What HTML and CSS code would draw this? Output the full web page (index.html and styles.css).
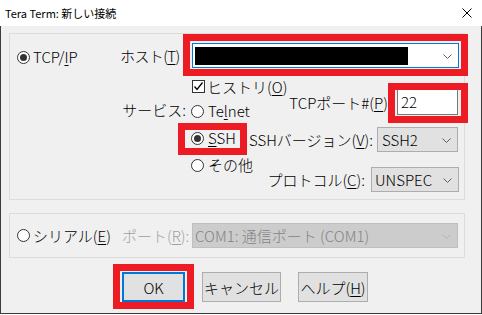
FILE: index.html
```html
<!DOCTYPE html>
<html lang="ja">
<head>
    <meta charset="UTF-8">
    <title>Tera Term: 新しい接続</title>
    <link rel="stylesheet" href="styles.css">
</head>
<body>
<div class="window">
    <div class="titlebar">
        <span class="title">Tera Term: 新しい接続</span>
        <svg class="close" width="10" height="10" viewBox="0 0 10 10">
            <path d="M0.5 0.5 L9.5 9.5 M9.5 0.5 L0.5 9.5" stroke="#000" stroke-width="1" fill="none"/>
        </svg>
    </div>
    <div class="client">
        <!-- TCP/IP -->
        <div class="group group-tcp">
            <div class="tcp-col">
                <label class="radio"><span class="dot checked"></span><span>TCP/<u>I</u>P</span></label>
            </div>
            <div class="tcp-body">
                <div class="host-row">
                    <span class="host-lbl">ホスト(<u>T</u>)</span>
                    <div class="combo host">
                        <div class="selection"></div>
                        <svg class="chev" width="9" height="5" viewBox="0 0 9 5"><polyline points="0.5,0.5 4.5,4.5 8.5,0.5" fill="none" stroke="#606060"/></svg>
                    </div>
                </div>
                <div class="svc">
                    <span class="svc-lbl">サービス:</span>
                    <div class="svc-left">
                        <label class="check-row">
                            <span class="checkbox">
                                <svg width="11" height="11" viewBox="0 0 11 11"><polyline points="1.5,5.5 4,8.5 9.5,1.5" fill="none" stroke="#000" stroke-width="1.3"/></svg>
                            </span>
                            <span>ヒストリ(<u>O</u>)</span>
                        </label>
                        <label class="radio svc-item telnet"><span class="dot"></span><span>Te<u>l</u>net</span></label>
                        <label class="radio svc-item ssh"><span class="dot checked"></span><span><u>S</u>SH</span></label>
                        <label class="radio svc-item other"><span class="dot"></span><span>その他</span></label>
                    </div>
                    <div class="svc-right">
                        <div class="field port-row">
                            <span>TCPポート#(<u>P</u>)</span>
                            <div class="textbox">22</div>
                        </div>
                        <div class="field ver-row">
                            <span>SSHバージョン(<u>V</u>):</span>
                            <div class="select ver">SSH2
                                <svg class="chev" width="9" height="5" viewBox="0 0 9 5"><polyline points="0.5,0.5 4.5,4.5 8.5,0.5" fill="none" stroke="#606060"/></svg>
                            </div>
                        </div>
                        <div class="field proto-row">
                            <span>プロトコル(<u>C</u>):</span>
                            <div class="select proto">UNSPEC
                                <svg class="chev" width="9" height="5" viewBox="0 0 9 5"><polyline points="0.5,0.5 4.5,4.5 8.5,0.5" fill="none" stroke="#606060"/></svg>
                            </div>
                        </div>
                    </div>
                </div>
            </div>
        </div>

        <!-- シリアル -->
        <div class="group group-serial">
            <label class="radio serial"><span class="dot"></span><span>シリアル(<u>E</u>)</span></label>
            <span class="port-lbl">ポート(<u>R</u>):</span>
            <div class="select com">COM1: 通信ポート (COM1)
                <svg class="chev" width="9" height="5" viewBox="0 0 9 5"><polyline points="0.5,0.5 4.5,4.5 8.5,0.5" fill="none" stroke="#b5b5b5"/></svg>
            </div>
        </div>

        <div class="buttons">
            <button class="btn btn-ok">OK</button>
            <button class="btn btn-cancel">キャンセル</button>
            <button class="btn btn-help">ヘルプ(<u>H</u>)</button>
        </div>
    </div>

    <!-- 赤枠 -->
    <div class="mark mark-host"></div>
    <div class="mark mark-port"></div>
    <div class="mark mark-ssh"></div>
    <div class="mark mark-ok"></div>
</div>
</body>
</html>
```

FILE: styles.css
```css
* {
    box-sizing: border-box;
}
body {
    margin: 0;
    background-color: #ffffff;
    font-family: "Noto Sans CJK JP", "Noto Sans", sans-serif;
    font-size: 15px;
    font-weight: 300;
    color: #000000;
}
u {
    text-decoration-thickness: 1px;
    text-underline-offset: 2px;
}
.window {
    position: relative;
    width: 482px;
    height: 314px;
    display: flex;
    flex-direction: column;
}
.titlebar {
    height: 26px;
    background-color: #ffffff;
    display: flex;
    align-items: center;
    padding-left: 5px;
    font-size: 11px;
    font-weight: 400;
}
.close {
    margin-left: auto;
    margin-right: 10px;
}
.client {
    flex: 1;
    background-color: #f0f0f0;
    border: 1px solid #3c3c3c;
    border-top: none;
    padding: 7px 0 0 8px;
}
.group {
    width: 456px;
    border: 1px solid #dcdcdc;
}
.group-tcp {
    height: 167px;
    display: flex;
}
.tcp-col {
    width: 107px;
    flex-shrink: 0;
    padding-left: 7px;
    padding-top: 13px;
}
.radio {
    display: flex;
    align-items: center;
    gap: 3px;
    height: 20px;
    line-height: 20px;
    white-space: nowrap;
}
.dot {
    width: 13px;
    height: 13px;
    border: 1px solid #333333;
    border-radius: 50%;
    background-color: #ffffff;
    display: flex;
    align-items: center;
    justify-content: center;
    flex-shrink: 0;
}
.dot.checked::after {
    content: "";
    width: 7px;
    height: 7px;
    border-radius: 50%;
    background-color: #333333;
}
.tcp-body {
    flex: 1;
    min-width: 0;
    display: flex;
    flex-direction: column;
}
.host-row {
    margin-top: 9px;
    height: 25px;
    display: flex;
    align-items: center;
}
.host-lbl {
    width: 75px;
    flex-shrink: 0;
    padding-left: 3px;
    letter-spacing: -0.6px;
    white-space: nowrap;
}
.combo {
    position: relative;
    width: 267px;
    flex-shrink: 0;
    height: 25px;
    border: 1px solid #0078d7;
    background-color: #ffffff;
    padding: 3px 2px;
}
.selection {
    width: 213px;
    height: 18px;
    background-color: #000000;
}
.chev {
    position: absolute;
    right: 6px;
    top: 50%;
    margin-top: -2px;
}
.svc {
    display: flex;
}
.svc-lbl {
    width: 74px;
    flex-shrink: 0;
    margin-top: 32px;
    height: 20px;
    line-height: 20px;
    text-align: right;
    padding-right: 5px;
    white-space: nowrap;
}
.svc-left {
    flex-shrink: 0;
    display: flex;
    flex-direction: column;
}
.check-row {
    margin-top: 8px;
    height: 20px;
    display: flex;
    align-items: center;
    gap: 2px;
    padding-left: 1px;
    white-space: nowrap;
}
.checkbox {
    width: 13px;
    height: 13px;
    border: 1px solid #333333;
    background-color: #ffffff;
    display: flex;
}
.svc-item {
    gap: 4px;
}
.telnet {
    margin-top: 5px;
}
.ssh,
.other {
    margin-top: 7px;
}
.svc-right {
    flex: 1;
    min-width: 0;
    display: flex;
    flex-direction: column;
    align-items: flex-end;
    padding-right: 6px;
}
.field {
    display: flex;
    align-items: center;
    white-space: nowrap;
}
.port-row {
    margin-top: 21px;
    gap: 9px;
}
.textbox {
    width: 61px;
    flex-shrink: 0;
    height: 26px;
    border: 1px solid #7a7a7a;
    background-color: #ffffff;
    padding-left: 3px;
    line-height: 24px;
}
.select {
    position: relative;
    flex-shrink: 0;
    height: 25px;
    border: 1px solid #adadad;
    background-color: #e1e1e1;
    line-height: 23px;
    white-space: nowrap;
}
.ver-row {
    margin-top: 12px;
    gap: 4px;
}
.select.ver {
    width: 81px;
    padding-left: 4px;
}
.proto-row {
    margin-top: 15px;
    gap: 6px;
    margin-right: -1px;
}
.select.proto {
    width: 88px;
    padding-left: 3px;
}
.group-serial {
    margin-top: 13px;
    height: 45px;
    display: flex;
    align-items: center;
    padding-left: 7px;
}
.serial {
    width: 105px;
    flex-shrink: 0;
}
.port-lbl {
    width: 70px;
    flex-shrink: 0;
    color: #a0a0a0;
    white-space: nowrap;
}
.select.com {
    width: 266px;
    background-color: #cccccc;
    border-color: #bfbfbf;
    color: #838383;
    padding-left: 2px;
}
.buttons {
    margin-top: 14px;
    padding-left: 113px;
    display: flex;
    gap: 17px;
}
.btn {
    height: 30px;
    border: 1px solid #adadad;
    background-color: #e1e1e1;
    font-family: inherit;
    font-size: 15px;
    font-weight: 300;
    color: #000000;
    padding: 0;
    white-space: nowrap;
}
.btn-ok {
    width: 63px;
    border: 2px solid #0078d7;
}
.btn-cancel {
    width: 79px;
}
.btn-help {
    width: 70px;
}
.mark {
    position: absolute;
    border: 7px solid #ed1c24;
    pointer-events: none;
}
.mark-host {
    left: 183px;
    top: 34px;
    width: 285px;
    height: 42px;
}
.mark-port {
    left: 388px;
    top: 83px;
    width: 80px;
    height: 40px;
}
.mark-ssh {
    left: 178px;
    top: 123px;
    width: 69px;
    height: 32px;
}
.mark-ok {
    left: 113px;
    top: 264px;
    width: 81px;
    height: 45px;
}
```
